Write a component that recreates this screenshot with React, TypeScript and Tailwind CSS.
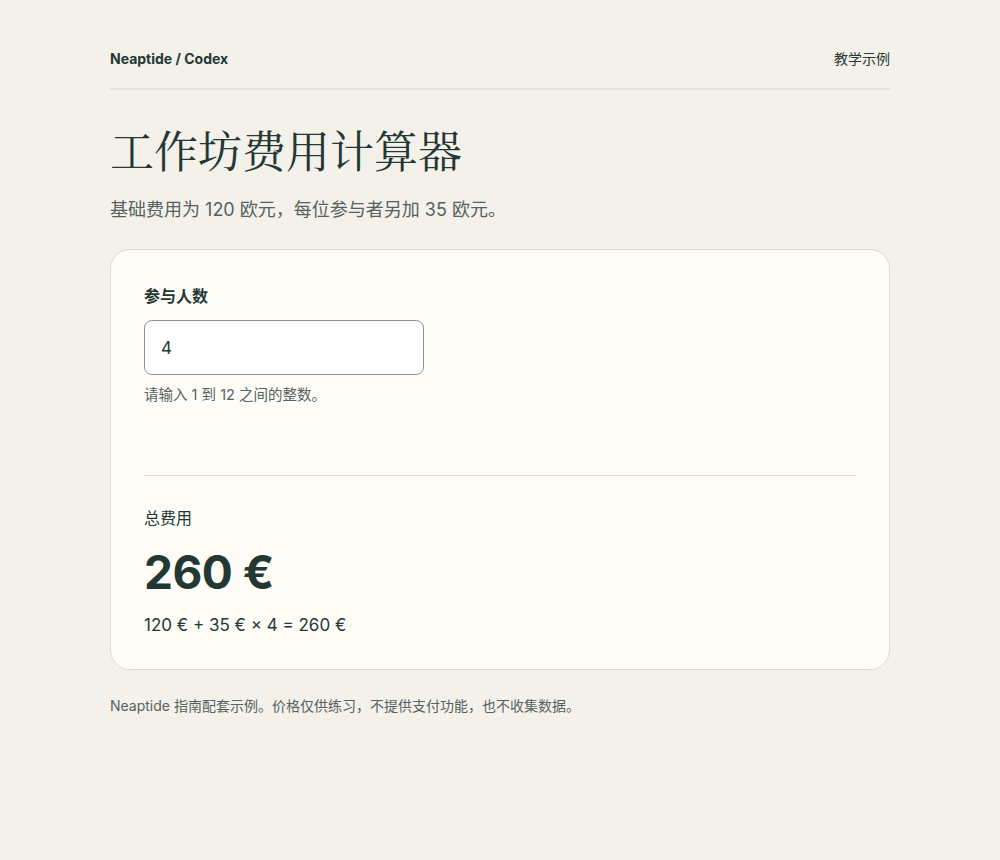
import { useState } from 'react'

const sans = { fontFamily: 'Inter, "Noto Sans CJK SC", sans-serif' }

export default function App() {
  const [count, setCount] = useState('4')
  const n = Number(count)
  const valid = Number.isInteger(n) && n >= 1 && n <= 12
  const total = valid ? 120 + 35 * n : 0

  return (
    <div className="min-h-[860px] bg-[#f4f1eb] text-[#243833]" style={sans}>
      <div className="mx-auto w-[780px] pt-[49px]">
        <header className="flex items-center justify-between border-b-2 border-[#e6e3dc] pb-[19px]">
          <div className="text-[14px] font-bold leading-[20px]">Neaptide / Codex</div>
          <div className="text-[14px] leading-[20px]">教学示例</div>
        </header>

        <h1
          className="mt-[34px] text-[44px] font-normal leading-[60px]"
          style={{ fontFamily: '"Liberation Serif", "Noto Serif CJK SC", "Noto Sans CJK SC", serif' }}
        >
          工作坊费用计算器
        </h1>
        <p className="mt-[13px] text-[18px] leading-[26px] text-[#56625e]">
          基础费用为 120 欧元，每位参与者另加 35 欧元。
        </p>

        <section className="mt-[26px] rounded-[20px] border border-[#dedbd3] bg-[#fdfcf7] px-[33px] pt-[34px] pb-[32px]">
          <label className="block text-[16px] font-semibold leading-[24px]" htmlFor="count">
            参与人数
          </label>
          <input
            id="count"
            value={count}
            onChange={e => setCount(e.target.value)}
            className="mt-[12px] block h-[55px] w-[280px] rounded-[8px] border border-[#8a9592] bg-white px-[16px] text-[17px] text-[#243833] outline-none"
          />
          <p className="mt-[10px] text-[14.5px] leading-[20px] text-[#56625e]">请输入 1 到 12 之间的整数。</p>

          <div className="mt-[70px] border-t border-[#dedbd3]" />

          <div className="mt-[30px] text-[16px] leading-[24px]">总费用</div>
          <div className="mt-[12px] text-[46px] font-bold leading-[60px] tracking-[-0.5px]">
            {valid ? total : '—'} €
          </div>
          <div className="mt-[11px] text-[17px] leading-[24px]">
            120 € + 35 € × {valid ? n : '?'} = {valid ? total : '—'} €
          </div>
        </section>

        <p className="mt-[26px] text-[14px] leading-[20px] text-[#56625e]">
          Neaptide 指南配套示例。价格仅供练习，不提供支付功能，也不收集数据。
        </p>
      </div>
    </div>
  )
}
